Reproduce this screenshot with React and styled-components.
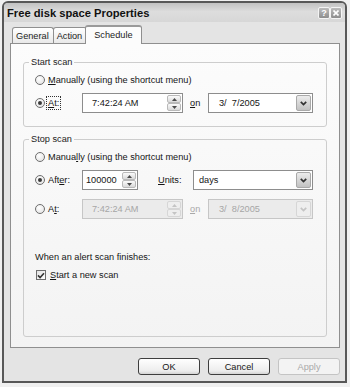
import React from 'react';
import styled, { createGlobalStyle, css } from 'styled-components';

const GlobalStyle = createGlobalStyle`
    html, body {
        margin: 0;
        padding: 0;
        background: #f0f0f0;
    }
    body {
        font-family: "Liberation Sans", Arial, sans-serif;
        font-size: 9.2px;
        color: #151515;
    }
    #root {
        width: 350px;
        height: 387px;
        overflow: hidden;
    }
`;

const Window = styled.div`
    box-sizing: border-box;
    margin: 1px 0 0 2px;
    width: 345px;
    height: 382px;
    border: 2px solid #585858;
    border-radius: 6px 6px 0 0;
    background: #e4e4e4;
    display: flex;
    flex-direction: column;
`;

const TitleBar = styled.div`
    flex: none;
    height: 19px;
    display: flex;
    align-items: center;
    padding: 0 3px;
    border-radius: 4px 4px 0 0;
    background: linear-gradient(to bottom, #c2c2c2 0%, #dddddd 45%, #d7d7d7 100%);
`;

const Title = styled.div`
    flex: 1;
    font-size: 11.2px;
    font-weight: bold;
    color: #111;
    white-space: nowrap;
`;

const CaptionButton = styled.div`
    box-sizing: border-box;
    width: 12px;
    height: 12px;
    border: 1px solid #f4f4f4;
    border-radius: 2px;
    background: linear-gradient(#bcbcbc, #8e8e8e);
    display: flex;
    align-items: center;
    justify-content: center;
    color: #fff;
    font-size: 9px;
    font-weight: bold;
`;

const Body = styled.div`
    flex: 1;
    display: flex;
    flex-direction: column;
    padding: 0 5px 0 6px;
`;

const TabStrip = styled.div`
    flex: none;
    position: relative;
    z-index: 1;
    height: 19px;
    margin: 3px 0 -1px;
    padding-left: 3px;
    display: flex;
    align-items: flex-end;
`;

const Tab = styled.div`
    box-sizing: border-box;
    height: 16px;
    margin: 0 0 1px -1px;
    padding: 0 4px 0 3px;
    display: flex;
    align-items: center;
    border: 1px solid #8f8f8f;
    border-bottom: none;
    border-radius: 3px 3px 0 0;
    background: linear-gradient(#ffffff, #e9e9e9);
    color: #222;
    ${p => p.$active && css`
        height: 19px;
        margin: 0 -2px 0 -2px;
        padding: 0 8px 2px;
        border-top: 2px solid #9a9a9a;
        background: #fcfcfc;
        position: relative;
        z-index: 1;
    `}
`;

const Panel = styled.div`
    flex: 1;
    display: flex;
    flex-direction: column;
    gap: 6px;
    padding: 12px 12px 10px;
    border: 1px solid #8f8f8f;
    background: linear-gradient(#fcfcfc, #f3f3f3);
`;

const Group = styled.fieldset`
    margin: 0;
    min-width: 0;
    padding: 4px 11px 13px;
    border: 1px solid #cdcdcd;
    border-radius: 3px;
    display: flex;
    flex-direction: column;
    ${p => p.$grow && 'flex: 1;'}
`;

const Legend = styled.legend`
    margin-left: -6px;
    padding: 0 2px;
    line-height: 12px;
    color: #222;
`;

const Row = styled.div`
    display: flex;
    align-items: center;
    height: ${p => p.$h || 16}px;
    margin-top: ${p => p.$mt || 0}px;
    margin-left: ${p => p.$ml || 0}px;
`;

const Choice = styled.label`
    flex: none;
    display: flex;
    align-items: center;
    gap: ${p => p.$gap || 3}px;
    width: ${p => (p.$w ? `${p.$w}px` : 'auto')};
    white-space: nowrap;
`;

const Radio = styled.span`
    flex: none;
    box-sizing: border-box;
    width: 10px;
    height: 10px;
    border: 1px solid #6e6e6e;
    border-radius: 50%;
    background: radial-gradient(circle at 40% 35%, #ffffff, #dedede);
    display: flex;
    align-items: center;
    justify-content: center;
    &::after {
        content: '';
        width: 4px;
        height: 4px;
        border-radius: 50%;
        background: ${p => (p.$checked ? '#3b3b3b' : 'transparent')};
    }
`;

const CheckBox = styled.span`
    flex: none;
    box-sizing: border-box;
    width: 10px;
    height: 10px;
    border: 1px solid #6e6e6e;
    background: linear-gradient(135deg, #e2e2e2, #ffffff);
    display: flex;
    align-items: center;
    justify-content: center;
`;

const Key = styled.span`
    text-decoration: underline;
`;

const Focus = styled.span`
    outline: 1px dotted #333;
    outline-offset: 1px;
`;

const Caption = styled.span`
    flex: none;
    width: ${p => p.$w}px;
    margin-left: ${p => p.$ml || 0}px;
    color: ${p => (p.$disabled ? '#a9a9a9' : 'inherit')};
`;

const Field = styled.div`
    flex: none;
    box-sizing: border-box;
    width: ${p => p.$w}px;
    height: ${p => p.$h || 20}px;
    padding: 1px;
    display: flex;
    border: 1px solid ${p => (p.$disabled ? '#c6c6c6' : '#8d8d8d')};
    background: ${p => (p.$disabled ? '#ebebeb' : '#ffffff')};
    color: ${p => (p.$disabled ? '#a6a6a6' : '#151515')};
`;

const FieldText = styled.span`
    flex: 1;
    display: flex;
    align-items: center;
    padding-left: ${p => p.$pad}px;
    white-space: pre;
`;

const Spin = styled.div`
    flex: none;
    width: 14px;
    display: flex;
    flex-direction: column;
`;

const SpinButton = styled.div`
    flex: 1;
    box-sizing: border-box;
    border: 1px solid ${p => (p.$disabled ? '#d6d6d6' : '#b9b9b9')};
    border-radius: 2px;
    background: ${p => (p.$disabled ? '#eeeeee' : 'linear-gradient(#fbfbfb, #d9d9d9)')};
    display: flex;
    align-items: center;
    justify-content: center;
`;

const DropButton = styled.div`
    flex: none;
    box-sizing: border-box;
    width: 15px;
    border: 1px solid ${p => (p.$disabled ? '#d6d6d6' : '#a9a9a9')};
    border-radius: 2px;
    background: ${p => (p.$disabled ? '#eeeeee' : 'linear-gradient(#ececec, #c2c2c2)')};
    display: flex;
    align-items: center;
    justify-content: center;
`;

const ButtonRow = styled.div`
    flex: none;
    display: flex;
    justify-content: flex-end;
    gap: 8px;
    padding: 10px 0 6px;
`;

const Button = styled.button`
    box-sizing: border-box;
    width: 62px;
    height: 17px;
    padding: 0;
    font: inherit;
    color: ${p => (p.disabled ? '#a9a9a9' : '#151515')};
    border: 1px solid ${p => (p.disabled ? '#c4c4c4' : '#3e3e3e')};
    border-radius: 3px;
    background: ${p => (p.disabled ? '#f3f3f3' : 'linear-gradient(#ffffff, #ededed 80%, #d4d4d4)')};
`;

const Arrow = ({ up, color }) => (
    <svg width="5" height="3" viewBox="0 0 5 3">
        <path d={up ? 'M0 3 L2.5 0 L5 3 Z' : 'M0 0 L2.5 3 L5 0 Z'} fill={color} />
    </svg>
);

const Chevron = ({ color }) => (
    <svg width="7" height="5" viewBox="0 0 7 5">
        <path d="M0.8 0.8 L3.5 3.6 L6.2 0.8" fill="none" stroke={color} strokeWidth="1.7" />
    </svg>
);

const Spinner = ({ disabled }) => {
    const c = disabled ? '#c4c4c4' : '#4a4a4a';
    return (
        <Spin>
            <SpinButton $disabled={disabled}><Arrow up color={c} /></SpinButton>
            <SpinButton $disabled={disabled}><Arrow color={c} /></SpinButton>
        </Spin>
    );
};

const DateRow = ({ time, date, disabled }) => (
    <>
        <Field $w={101} $disabled={disabled}>
            <FieldText $pad={8}>{time}</FieldText>
            <Spinner disabled={disabled} />
        </Field>
        <Caption $w={18} $ml={7} $disabled={disabled}><Key>o</Key>n</Caption>
        <Field $w={105} $disabled={disabled}>
            <FieldText $pad={9}>{date}</FieldText>
            <DropButton $disabled={disabled}>
                <Chevron color={disabled ? '#c4c4c4' : '#333'} />
            </DropButton>
        </Field>
    </>
);

const App = () => (
    <>
        <GlobalStyle />
        <Window>
            <TitleBar>
                <Title>Free disk space Properties</Title>
                <CaptionButton>?</CaptionButton>
                <CaptionButton>
                    <svg width="6" height="6" viewBox="0 0 6 6">
                        <path d="M0.5 0.5 L5.5 5.5 M5.5 0.5 L0.5 5.5" stroke="#fff" strokeWidth="1.6" />
                    </svg>
                </CaptionButton>
            </TitleBar>
            <Body>
                <TabStrip>
                    <Tab>General</Tab>
                    <Tab>Action</Tab>
                    <Tab $active>Schedule</Tab>
                </TabStrip>
                <Panel>
                    <Group>
                        <Legend>Start scan</Legend>
                        <Row>
                            <Choice>
                                <Radio />
                                <span><Key>M</Key>anually (using the shortcut menu)</span>
                            </Choice>
                        </Row>
                        <Row $h={20} $mt={5}>
                            <Choice $w={47}>
                                <Radio $checked />
                                <Focus><Key>A</Key>t:</Focus>
                            </Choice>
                            <DateRow time="7:42:24 AM" date="3/  7/2005" />
                        </Row>
                    </Group>
                    <Group $grow>
                        <Legend>Stop scan</Legend>
                        <Row>
                            <Choice>
                                <Radio />
                                <span>Manua<Key>l</Key>ly (using the shortcut menu)</span>
                            </Choice>
                        </Row>
                        <Row $h={20} $mt={5}>
                            <Choice $w={47}>
                                <Radio $checked />
                                <span>Aft<Key>e</Key>r:</span>
                            </Choice>
                            <Field $w={56}>
                                <FieldText $pad={2}>100000</FieldText>
                                <Spinner />
                            </Field>
                            <Caption $w={35} $ml={20}><Key>U</Key>nits:</Caption>
                            <Field $w={120}>
                                <FieldText $pad={4}>days</FieldText>
                                <DropButton><Chevron color="#333" /></DropButton>
                            </Field>
                        </Row>
                        <Row $h={20} $mt={9}>
                            <Choice $w={47}>
                                <Radio />
                                <span>A<Key>t</Key>:</span>
                            </Choice>
                            <DateRow time="7:42:24 AM" date="3/  8/2005" disabled />
                        </Row>
                        <Row $h={12} $mt={32}>When an alert scan finishes:</Row>
                        <Row $mt={4} $ml={1}>
                            <Choice $gap={4}>
                                <CheckBox>
                                    <svg width="8" height="7" viewBox="0 0 8 7">
                                        <path d="M1 3.4 L3.1 5.6 L7 1.2" fill="none" stroke="#333" strokeWidth="1.6" />
                                    </svg>
                                </CheckBox>
                                <span><Key>S</Key>tart a new scan</span>
                            </Choice>
                        </Row>
                    </Group>
                </Panel>
                <ButtonRow>
                    <Button>OK</Button>
                    <Button>Cancel</Button>
                    <Button disabled>Apply</Button>
                </ButtonRow>
            </Body>
        </Window>
    </>
);

export default App;
